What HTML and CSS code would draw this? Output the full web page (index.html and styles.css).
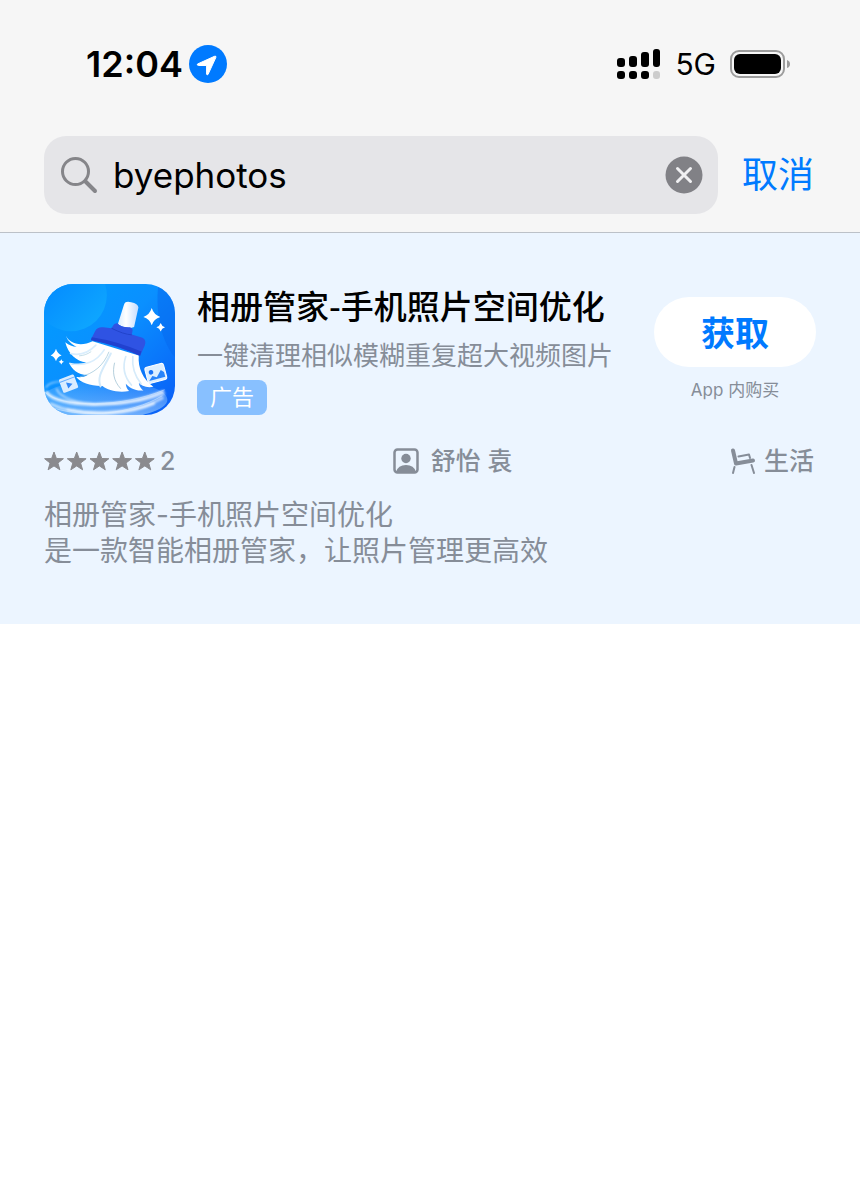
FILE: index.html
```html
<!DOCTYPE html>
<html lang="zh-CN">
<head>
    <meta charset="UTF-8">
    <meta name="viewport" content="width=device-width, initial-scale=1.0">
    <title>App Store</title>
    <link rel="stylesheet" href="styles.css">
</head>
<body>
    <header class="top">
        <div class="status-bar">
            <div class="status-left">
                <span class="time">12:04</span>
                <svg class="location" viewBox="0 0 38 38" aria-hidden="true">
                    <circle cx="19" cy="19" r="19" fill="#007aff"/>
                    <path d="M8.500 19 25.500 11.300Q27.500 10.600 26.800 12.600L19 29.500Q18 30.500 17.600 29V20.500H9.500Q7.500 20 8.500 19Z" fill="#fff" stroke="#fff" stroke-linejoin="round"/>
                </svg>
            </div>
            <div class="status-right">
                <svg class="signal" viewBox="0 0 44 32" aria-hidden="true">
                    <rect x="0" y="10" width="8" height="9" rx="3"/>
                    <rect x="12" y="8" width="8" height="11" rx="3"/>
                    <rect x="24" y="4" width="8" height="15" rx="3"/>
                    <rect x="36" y="1" width="7" height="18" rx="3"/>
                    <rect x="0" y="23" width="8" height="8" rx="3"/>
                    <rect x="12" y="23" width="8" height="8" rx="3"/>
                    <rect x="24" y="23" width="8" height="8" rx="3"/>
                    <rect x="36" y="23" width="7" height="8" rx="3" fill="#ccc"/>
                </svg>
                <span class="network">5G</span>
                <svg class="battery" viewBox="0 0 60 28" aria-hidden="true">
                    <rect x="1" y="1" width="53" height="26" rx="8" fill="none" stroke="#9c9c9c" stroke-width="2"/>
                    <rect x="4" y="4" width="47" height="20" rx="6"/>
                    <path d="M57 10q3 1 3 4t-3 4z" fill="#9c9c9c"/>
                </svg>
            </div>
        </div>

        <!-- Search -->
        <form class="search-row">
            <div class="search-box">
                <svg class="search-icon" viewBox="0 0 38 38" fill="none" stroke="#858589" stroke-width="3" stroke-linecap="round" aria-hidden="true">
                    <circle cx="15.500" cy="15.500" r="13"/>
                    <path d="M25.500 25.500 35 35" stroke-width="4"/>
                </svg>
                <input class="search-input" type="text" name="q" value="byephotos" aria-label="搜索">
                <button class="clear" type="reset" aria-label="清除">
                    <svg viewBox="0 0 38 38" aria-hidden="true">
                        <circle cx="19" cy="19" r="18.500" fill="#818186"/>
                        <path d="M12.500 12.500l13 13m0-13l-13 13" stroke="#f0f0f2" stroke-width="3" stroke-linecap="round"/>
                    </svg>
                </button>
            </div>
            <button class="cancel" type="button">取消</button>
        </form>
    </header>

    <!-- Promoted result -->
    <main class="result">
        <div class="app">
            <svg class="app-icon" viewBox="24 24 394 394" role="img" aria-label="相册管家">
                <defs>
                    <linearGradient id="bg" x1="0" y1="0" x2="1" y2="1">
                        <stop offset="0" stop-color="#009dff"/>
                        <stop offset=".45" stop-color="#0a90ff"/>
                        <stop offset="1" stop-color="#0a5cf6"/>
                    </linearGradient>
                    <linearGradient id="disc" x1="0" y1="0" x2="1" y2="1">
                        <stop offset="0" stop-color="#0080ff"/>
                        <stop offset="1" stop-color="#10acff"/>
                    </linearGradient>
                    <linearGradient id="handle" x1="0" y1="0" x2="1" y2="0">
                        <stop offset="0" stop-color="#d8ebff"/>
                        <stop offset=".4" stop-color="#fff"/>
                        <stop offset="1" stop-color="#c3dcff"/>
                    </linearGradient>
                    <linearGradient id="floor" x1="0" y1="0" x2="0" y2="1">
                        <stop offset="0" stop-color="#7dbcff" stop-opacity=".2"/>
                        <stop offset="1" stop-color="#a8d4ff" stop-opacity=".7"/>
                    </linearGradient>
                    <clipPath id="tile"><rect x="24" y="24" width="394" height="394" rx="88"/></clipPath>
                    <filter id="glow" x="-20%" y="-20%" width="140%" height="140%"><feGaussianBlur stdDeviation="3"/></filter>
                </defs>
                <g clip-path="url(#tile)">
                    <path d="M24 24h394v394H24z" fill="url(#bg)"/>
                    <path d="M368 24h50v220c-40-45-60-130-50-220z" fill="#0668ee" opacity=".5"/>
                    <circle cx="105" cy="58" r="108" fill="url(#disc)"/>
                    <!-- swirl under the broom -->
                    <ellipse cx="205" cy="372" rx="190" ry="58" fill="url(#floor)"/>
                    <g fill="none" stroke="#fff" stroke-linecap="round" filter="url(#glow)">
                        <path d="M32 350c30 45 225 52 350-2" stroke-width="9" opacity=".8"/>
                        <path d="M62 340c20 55 210 60 325 15" stroke-width="5" opacity=".6"/>
                        <path d="M45 385c80 40 240 35 335-18" stroke-width="9" opacity=".6"/>
                        <path d="M95 402c85 18 180 15 260-18" stroke-width="7" opacity=".8"/>
                        <path d="M30 335c5-10 25-18 55-18" stroke-width="4" opacity=".6"/>
                    </g>
                    <path d="M27 350c50 48 235 45 360-8M55 398c95 28 225 20 325-38" fill="none" stroke="#e2f2ff" stroke-width="2" opacity=".7"/>
                    <!-- media tiles -->
                    <g transform="rotate(-21 98 324)">
                        <rect x="74" y="302" width="48" height="43" rx="4" fill="#d9ecff"/>
                        <path d="M74 311h48" stroke="#61aaff" stroke-width="3"/>
                        <path d="M92 318v19l17-9z" fill="#3187f8"/>
                    </g>
                    <g transform="rotate(-15 360 292)">
                        <rect x="331" y="268" width="58" height="50" rx="7" fill="#dceeff" stroke="#fff" stroke-width="3"/>
                        <circle cx="347" cy="286" r="7" fill="#1973f6"/>
                        <path d="M335 310l13-12 12 7 17-18 8 8v15z" fill="#2884fa"/>
                    </g>
                    <!-- broom -->
                    <path d="M90 180c10 23 45 34 80 16l139 43c-3 38 13 72 44 94-20 5-38-4-44-12 2 13 9 20 14 23-23 3-43-8-53-20 1 11 5 18 10 22-34 6-65-3-80-15-35 1-66-10-79-27 14 1 25 0 34-6-30 0-48-19-54-34 19 6 37 3 50-4-30-4-55-27-63-61 11 9 22 13 34 14-17-8-28-20-32-33z" fill="#fff"/>
                    <g fill="none" stroke-linecap="round">
                        <path d="M180 208c-23 24-49 32-76 25M205 222c-22 35-59 51-103 41" stroke="#daeefd" stroke-width="5"/>
                        <path d="M219 229c-15 39-45 65-86 74" stroke="#93bfd4" stroke-width="2"/>
                        <path d="M225 233c-21 43-43 67-31 99" stroke="#d4eafa" stroke-width="6"/>
                        <path d="M236 262c-6 26-4 52 18 76" stroke="#8fb6ca" stroke-width="2"/>
                        <path d="M270 242c-12 35-2 64 17 86M291 242c-3 34 8 61 25 82" stroke="#d6ebfa" stroke-width="5"/>
                        <path d="M165 228c-12 8-22 11-34 12" stroke="#a9cfde" stroke-width="2"/>
                    </g>
                    <path d="M264 88q3-14 22-9 21 4 22 16l-13 58q-22 8-49-8z" fill="url(#handle)"/>
                    <path d="M227 157l6-10q4-6 12-5 10 13 37 12 11 4 8 12l-2 10 32 10q13 7 7 23l-14 31q-68-32-148-49l13-26q7-13 24-11z" fill="#2f53e3"/>
                    <path d="M168 184q73 11 149 43l-4 13q-68-32-148-47z" fill="#2141cf"/>
                    <path d="M227 157q35 18 61 20" fill="none" stroke="#2143cb" stroke-width="3"/>
                    <!-- sparkles -->
                    <g fill="#fff">
                        <path d="M348 96q6 20 26 27-20 5-26 25-6-20-25-25 19-7 25-27zM375 141q3 10 13 13-10 3-13 13-3-10-13-13 10-3 13-13zM60 219q4 14 17 20-13 4-17 17-4-13-16-17 12-6 16-20zM76 250q2 6 8 8-6 2-8 8-2-6-8-8 6-2 8-8z"/>
                    </g>
                </g>
            </svg>
            <div class="app-info">
                <h1 class="app-name">相册管家-手机照片空间优化</h1>
                <p class="app-subtitle">一键清理相似模糊重复超大视频图片</p>
                <span class="ad">广告</span>
            </div>
            <div class="app-action">
                <button class="get" type="button">获取</button>
                <small class="iap">App 内购买</small>
            </div>
        </div>

        <div class="meta">
            <div class="meta-item rating">
                <svg class="stars" viewBox="0 0 112 20" fill="#8a8a8e" stroke="#8a8a8e" stroke-linejoin="round" role="img" aria-label="5 星">
                    <defs><path id="star" d="M10 1l2.400 6.500 7 .2-5.500 4.300 2 6.800L10 14.900l-5.900 3.900 2-6.800L.600 7.700l7-.2z"/></defs>
                    <use href="#star"/>
                    <use href="#star" x="22.700"/>
                    <use href="#star" x="45.400"/>
                    <use href="#star" x="68.100"/>
                    <use href="#star" x="90.800"/>
                </svg>
                <span class="count">2</span>
            </div>
            <div class="meta-item developer">
                <svg class="person" viewBox="0 0 26 26" fill="#868d98" aria-hidden="true">
                    <rect x="1.500" y="1.500" width="23" height="23" rx="3" fill="none" stroke="#868d98" stroke-width="2.500"/>
                    <circle cx="13" cy="10.500" r="4.700"/>
                    <path d="M3 24q2-7 10-7t10 7z"/>
                </svg>
                <span>舒怡 袁</span>
            </div>
            <div class="meta-item category">
                <svg class="chair" viewBox="0 0 26 26" fill="none" stroke="#868d98" stroke-linecap="round" stroke-linejoin="round" aria-hidden="true">
                    <path d="M3 2.500 6 15.500 23 12.500" stroke-width="4"/>
                    <path d="M8.500 8.500 19 6.500 20 10M4.500 19 3 25M21.500 17 24 25" stroke-width="2"/>
                </svg>
                <span>生活</span>
            </div>
        </div>

        <p class="description">相册管家-手机照片空间优化<br>是一款智能相册管家，让照片管理更高效</p>
    </main>
</body>
</html>
```

FILE: styles.css
```css
* {
    box-sizing: border-box;
}

body {
    margin: 0;
    background: #fff;
    color: #000;
    font-family: Inter, "Noto Sans CJK SC", sans-serif;
}

svg {
    display: block;
    flex: none;
}

button {
    padding: 0;
    border: none;
    background: none;
    font-family: inherit;
    cursor: pointer;
}

h1,
p {
    margin: 0;
}

/* Header */
.top {
    padding: 40px 46px 18px 44px;
    background: #f6f6f6;
    border-bottom: 1px solid #bcc1c8;
}

.status-bar {
    display: flex;
    align-items: center;
    justify-content: space-between;
    height: 48px;
    padding: 0 24px 0 42px;
}

.status-left,
.status-right {
    display: flex;
    align-items: center;
}

.status-left {
    gap: 6px;
}

.status-right {
    gap: 14px;
}

.time {
    font-size: 36px;
    font-weight: 600;
}

.location {
    width: 38px;
    height: 38px;
}

.signal {
    width: 44px;
    height: 32px;
}

.network {
    font-size: 30px;
}

.battery {
    width: 60px;
    height: 28px;
}

/* Search */
.search-row {
    display: flex;
    align-items: center;
    gap: 24px;
    margin-top: 48px;
}

.search-box {
    display: flex;
    flex: 1;
    align-items: center;
    min-width: 0;
    height: 78px;
    padding: 0 15px 0 16px;
    border-radius: 22px;
    background: #e5e5e8;
}

.search-icon {
    width: 38px;
    height: 38px;
}

.search-input {
    flex: 1;
    min-width: 0;
    padding: 0 15px;
    border: none;
    outline: none;
    background: none;
    color: #000;
    font-family: inherit;
    font-size: 35px;
}

.clear svg {
    width: 38px;
    height: 38px;
}

.cancel {
    color: #007aff;
    font-size: 36px;
    line-height: 48px;
}

/* Result card */
.result {
    padding: 51px 44px 55px;
    background: #ecf5ff;
    color: #868d98;
}

.app {
    display: flex;
    align-items: center;
}

.app-icon {
    width: 131px;
    height: 131px;
}

.app-info {
    flex: 1;
    min-width: 0;
    padding-left: 22px;
}

.app-name {
    margin-bottom: 6px;
    color: #000;
    font-family: "Noto Sans CJK SC", sans-serif;
    font-size: 33px;
    font-weight: 500;
    line-height: 42px;
    white-space: nowrap;
}

.app-subtitle {
    font-size: 26px;
    line-height: 48px;
    white-space: nowrap;
}

.ad {
    display: block;
    width: fit-content;
    padding: 0 13px;
    border-radius: 8px;
    background: #88c0ff;
    color: #fff;
    font-size: 22px;
    line-height: 35px;
}

.app-action {
    display: flex;
    flex-direction: column;
    align-items: center;
    gap: 10px;
}

.get {
    width: 162px;
    height: 70px;
    border-radius: 35px;
    background: #fff;
    color: #007aff;
    font-size: 34px;
    font-weight: 700;
}

.iap {
    font-size: 17px;
    line-height: 26px;
}

/* Rating, developer, category */
.meta {
    display: flex;
    justify-content: space-between;
    margin-top: 27px;
    padding-right: 2px;
    font-size: 25px;
    font-weight: 500;
    line-height: 38px;
}

.meta-item {
    display: flex;
    align-items: center;
}

.rating {
    gap: 4px;
}

.developer {
    gap: 12px;
}

.category {
    gap: 8px;
}

.stars {
    width: 112px;
    height: 20px;
}

.person,
.chair {
    width: 26px;
    height: 26px;
}

.description {
    margin-top: 17px;
    font-size: 28px;
    line-height: 36px;
}
```
